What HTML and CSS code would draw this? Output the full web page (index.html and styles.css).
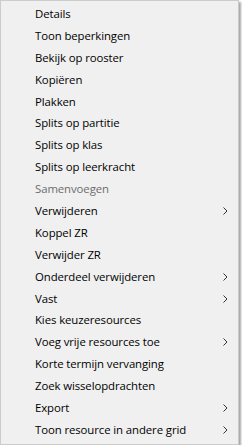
FILE: index.html
```html
<!DOCTYPE html>
<html>
<head>
<meta charset="utf-8">
<link rel="stylesheet" href="styles.css">
</head>
<body>
<div class="menu">
  <div class="item">Details</div>
  <div class="item">Toon beperkingen</div>
  <div class="item">Bekijk op rooster</div>
  <div class="item">Kopiëren</div>
  <div class="item">Plakken</div>
  <div class="item">Splits op partitie</div>
  <div class="item">Splits op klas</div>
  <div class="item">Splits op leerkracht</div>
  <div class="item disabled">Samenvoegen</div>
  <div class="item sub">Verwijderen<svg class="chev" width="5" height="8" viewBox="0 0 5 8"><path d="M0.5 0.5 L4 4 L0.5 7.5" fill="none" stroke="#333" stroke-width="1"/></svg></div>
  <div class="item">Koppel ZR</div>
  <div class="item">Verwijder ZR</div>
  <div class="item sub">Onderdeel verwijderen<svg class="chev" width="5" height="8" viewBox="0 0 5 8"><path d="M0.5 0.5 L4 4 L0.5 7.5" fill="none" stroke="#333" stroke-width="1"/></svg></div>
  <div class="item sub">Vast<svg class="chev" width="5" height="8" viewBox="0 0 5 8"><path d="M0.5 0.5 L4 4 L0.5 7.5" fill="none" stroke="#333" stroke-width="1"/></svg></div>
  <div class="item">Kies keuzeresources</div>
  <div class="item sub">Voeg vrije resources toe<svg class="chev" width="5" height="8" viewBox="0 0 5 8"><path d="M0.5 0.5 L4 4 L0.5 7.5" fill="none" stroke="#333" stroke-width="1"/></svg></div>
  <div class="item">Korte termijn vervanging</div>
  <div class="item">Zoek wisselopdrachten</div>
  <div class="item sub">Export<svg class="chev" width="5" height="8" viewBox="0 0 5 8"><path d="M0.5 0.5 L4 4 L0.5 7.5" fill="none" stroke="#333" stroke-width="1"/></svg></div>
  <div class="item sub">Toon resource in andere grid<svg class="chev" width="5" height="8" viewBox="0 0 5 8"><path d="M0.5 0.5 L4 4 L0.5 7.5" fill="none" stroke="#333" stroke-width="1"/></svg></div>
</div>
</body>
</html>
```

FILE: styles.css
```css
html, body {
  margin: 0;
  padding: 0;
  background: #ffffff;
}
.menu {
  box-sizing: border-box;
  width: 239px;
  height: 445px;
  background: #f0f0f0;
  border: 1px solid #cccccc;
  box-shadow: 2px 2px 2px rgba(0, 0, 0, 0.35);
  padding-top: 2px;
  font-family: "Open Sans", "Noto Sans", sans-serif;
  font-size: 11.4px;
  letter-spacing: -0.1px;
  color: #000000;
}
.item {
  height: 21.9px;
  line-height: 22px;
  padding-left: 34px;
  display: flex;
  align-items: center;
  position: relative;
  white-space: nowrap;
}
.disabled {
  color: #6d6d6d;
}
.chev {
  position: absolute;
  left: 222px;
  top: 7px;
}
```
